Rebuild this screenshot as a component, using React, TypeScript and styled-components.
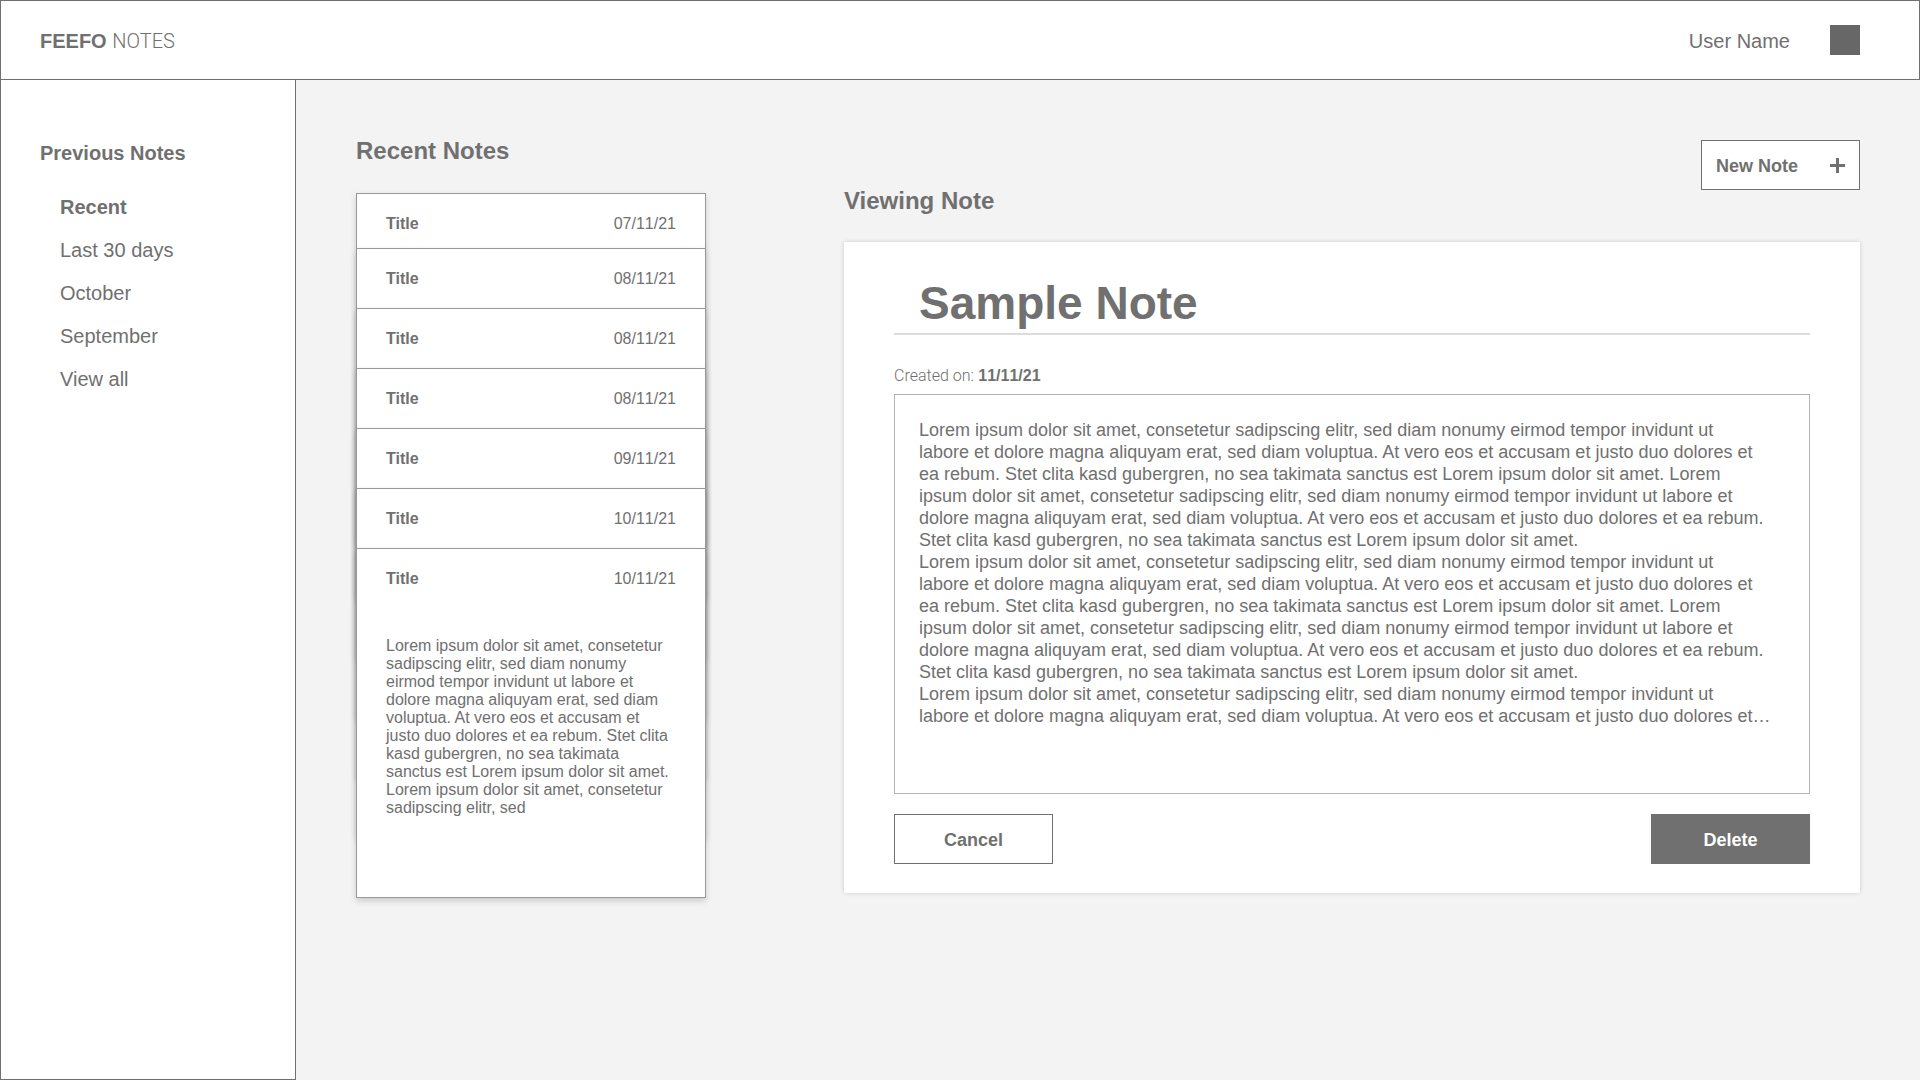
import React from "react";
import styled, { createGlobalStyle, css } from "styled-components";

const ink = "#707070";
const canvas = "#f3f3f3";

const GlobalStyle = createGlobalStyle`
  *, *::before, *::after { box-sizing: border-box; }
  body {
    margin: 0;
    background: ${canvas};
    color: ${ink};
    font-family: "Liberation Sans", Arial, sans-serif;
    font-size: 20px;
    line-height: 24px;
  }
  h1, h2, h3, p, ul { margin: 0; padding: 0; }
  button { font-family: inherit; color: inherit; cursor: pointer; }
  time { font-kerning: none; }
`;

const Page = styled.div`
  display: flex;
  flex-direction: column;
  min-height: 100vh;
`;

const Header = styled.header`
  display: flex;
  align-items: center;
  justify-content: space-between;
  height: 80px;
  padding: 0 59px 0 39px;
  background: #fff;
  border: 1px solid ${ink};
`;

const Brand = styled.h1`
  padding-top: 2px;
  font-size: 20px;
  line-height: 24px;
  font-weight: 700;
`;

const Light = styled.span`
  font-family: Roboto, "Liberation Sans", sans-serif;
  font-weight: 300;
`;

const User = styled.div`
  display: flex;
  align-items: center;
  gap: 40px;
`;

const UserName = styled.span`
  padding-top: 2px;
`;

const Avatar = styled.span`
  width: 30px;
  height: 30px;
  background: #676767;
`;

const Body = styled.div`
  display: flex;
  flex: 1;
`;

const Sidebar = styled.nav`
  flex: 0 0 296px;
  padding: 61px 39px;
  background: #fff;
  border: 1px solid ${ink};
  border-top: 0;
`;

const SidebarTitle = styled.h2`
  font-size: 20px;
  line-height: 24px;
`;

const NavList = styled.ul`
  display: flex;
  flex-direction: column;
  gap: 19px;
  margin-top: 30px;
  padding-left: 20px;
  list-style: none;
`;

const NavLink = styled.a<{ $active?: boolean }>`
  display: block;
  color: inherit;
  font-weight: ${(p) => (p.$active ? 700 : 400)};
  text-decoration: none;
`;

const Main = styled.main`
  display: flex;
  flex: 1;
  align-items: flex-start;
  gap: 138px;
  min-width: 0;
  padding: 59px 60px;
`;

const Recent = styled.section`
  flex: 0 0 350px;
`;

const SectionTitle = styled.h2`
  font-size: 24px;
  line-height: 24px;
`;

const Stack = styled.div`
  display: grid;
  grid-template-rows: 55px repeat(5, 60px) auto;
  margin-top: 30px;
`;

const StackCard = styled.article`
  height: 350px;
  padding: 21px 29px;
  background: #fff;
  border: 1px solid #989898;
  box-shadow: 0 3px 6px rgba(0, 0, 0, 0.16);
  font-size: 16px;
  line-height: 18px;

  &:last-child {
    height: auto;
    min-height: 350px;
  }
`;

const CardHead = styled.header`
  display: flex;
  justify-content: space-between;
`;

const CardTitle = styled.h3`
  font-size: 16px;
  line-height: 18px;
`;

const CardText = styled.p`
  margin-top: 49px;
`;

const Viewing = styled.section`
  flex: 1;
  min-width: 0;
`;

const ViewingHead = styled.div`
  display: flex;
  justify-content: space-between;
  align-items: flex-start;

  ${SectionTitle} { margin-top: 50px; }
`;

const Button = styled.button<{ $filled?: boolean; $spread?: boolean }>`
  display: flex;
  align-items: center;
  justify-content: center;
  width: 159px;
  height: 50px;
  padding: 0 14px;
  background: #fff;
  border: 1px solid ${ink};
  font-size: 18px;
  line-height: 22px;
  font-weight: 700;

  ${(p) => p.$spread && css`justify-content: space-between; margin-top: 1px;`}
  ${(p) => p.$filled && css`background: ${ink}; color: #fff;`}
`;

const ButtonLabel = styled.span`
  padding-top: 2px;
`;

const Note = styled.article`
  margin-top: 29px;
  padding: 35px 50px 29px;
  background: #fff;
  border-radius: 1px;
  box-shadow: 0 0 4px rgba(0, 0, 0, 0.16);
`;

const NoteTitle = styled.h2`
  padding: 0 25px 4px;
  border-bottom: 2px solid #dcdcdc;
  font-size: 46px;
  line-height: 52px;
`;

const Created = styled.p`
  margin: 31px 0 8px;
  font-size: 16px;
  line-height: 20px;
`;

const NoteText = styled.div`
  min-height: 400px;
  padding: 24px;
  border: 1px solid #b4b4b4;
  font-size: 18px;
  line-height: 22px;
  white-space: pre-line;
`;

const Actions = styled.div`
  display: flex;
  justify-content: space-between;
  margin-top: 20px;
`;

const PlusIcon = () => (
  <svg width="15" height="15" viewBox="0 0 15 15" aria-hidden="true">
    <path d="M7.5 0V15M0 7.5H15" stroke={ink} strokeWidth="3" />
  </svg>
);

const periods = ["Recent", "Last 30 days", "October", "September", "View all"];

const dates = [
  "07/11/21",
  "08/11/21",
  "08/11/21",
  "08/11/21",
  "09/11/21",
  "10/11/21",
  "10/11/21",
];

const preview =
  "Lorem ipsum dolor sit amet, consetetur sadipscing elitr, sed diam nonumy eirmod tempor invidunt ut labore et dolore magna aliquyam erat, sed diam voluptua. At vero eos et accusam et justo duo dolores et ea rebum. Stet clita kasd gubergren, no sea takimata sanctus est Lorem ipsum dolor sit amet. Lorem ipsum dolor sit amet, consetetur sadipscing elitr, sed";

const opening = `Lorem ipsum dolor sit amet, consetetur sadipscing elitr, sed diam nonumy eirmod tempor invidunt ut
labore et dolore magna aliquyam erat, sed diam voluptua. At vero eos et accusam et justo duo dolores et`;

const paragraph = `${opening}
ea rebum. Stet clita kasd gubergren, no sea takimata sanctus est Lorem ipsum dolor sit amet. Lorem
ipsum dolor sit amet, consetetur sadipscing elitr, sed diam nonumy eirmod tempor invidunt ut labore et
dolore magna aliquyam erat, sed diam voluptua. At vero eos et accusam et justo duo dolores et ea rebum.
Stet clita kasd gubergren, no sea takimata sanctus est Lorem ipsum dolor sit amet.`;

export default function App() {
  return (
    <Page>
      <GlobalStyle />
      <Header>
        <Brand>
          FEEFO <Light>NOTES</Light>
        </Brand>
        <User>
          <UserName>User Name</UserName>
          <Avatar />
        </User>
      </Header>
      <Body>
        <Sidebar aria-label="Previous notes">
          <SidebarTitle>Previous Notes</SidebarTitle>
          <NavList>
            {periods.map((period, i) => (
              <li key={period}>
                <NavLink href="#" $active={i === 0}>
                  {period}
                </NavLink>
              </li>
            ))}
          </NavList>
        </Sidebar>
        <Main>
          <Recent>
            <SectionTitle>Recent Notes</SectionTitle>
            <Stack>
              {dates.map((date, i) => (
                <StackCard key={i}>
                  <CardHead>
                    <CardTitle>Title</CardTitle>
                    <time>{date}</time>
                  </CardHead>
                  {i === dates.length - 1 && <CardText>{preview}</CardText>}
                </StackCard>
              ))}
            </Stack>
          </Recent>
          <Viewing>
            <ViewingHead>
              <SectionTitle>Viewing Note</SectionTitle>
              <Button type="button" $spread>
                <ButtonLabel>New Note</ButtonLabel>
                <PlusIcon />
              </Button>
            </ViewingHead>
            <Note>
              <NoteTitle>Sample Note</NoteTitle>
              <Created>
                <Light>Created on:</Light>{" "}
                <strong>
                  <time>11/11/21</time>
                </strong>
              </Created>
              <NoteText>
                <p>{paragraph}</p>
                <p>{paragraph}</p>
                <p>{`${opening}…`}</p>
              </NoteText>
              <Actions>
                <Button type="button">
                  <ButtonLabel>Cancel</ButtonLabel>
                </Button>
                <Button type="button" $filled>
                  <ButtonLabel>Delete</ButtonLabel>
                </Button>
              </Actions>
            </Note>
          </Viewing>
        </Main>
      </Body>
    </Page>
  );
}
